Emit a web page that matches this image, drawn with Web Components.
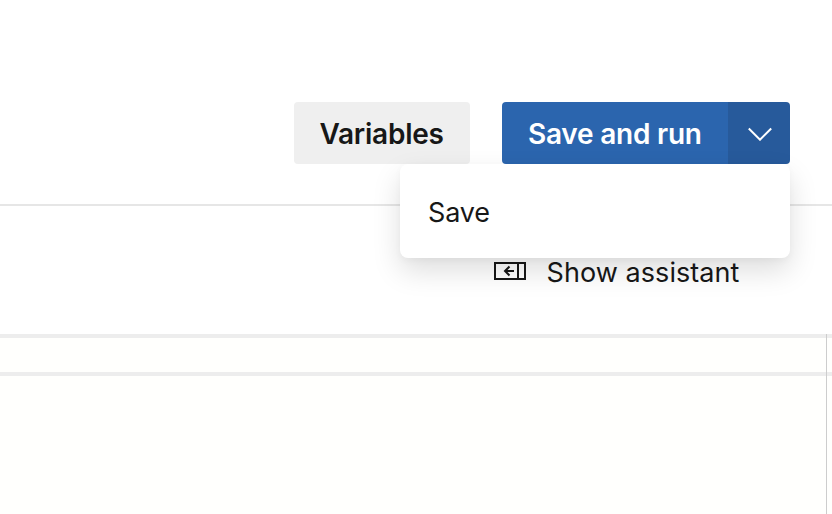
<!DOCTYPE html>
<html lang="en"><head><meta charset="utf-8"><title>Editor</title>
<style>html,body{margin:0;height:100%;overflow:hidden;background:#fff}body{font-family:Inter,"Liberation Sans",sans-serif;color:#171717}</style></head>
<body>
<editor-page></editor-page>
<script>
const define=(name,html)=>customElements.define(name,class extends HTMLElement{
  constructor(){super();this.attachShadow({mode:'open'}).innerHTML=html}
});
define('plain-button',`<style>
:host{display:flex;box-sizing:border-box;width:176px;height:62px;padding-left:25.5px;align-items:center;border-radius:4px;background:#efefef;font-size:28px;font-weight:600;letter-spacing:-.25px;white-space:nowrap}
span{padding-top:2px}</style><span><slot></slot></span>`);
define('split-button',`<style>
:host{display:flex;position:relative;width:288px;height:62px;color:#fff;font-size:28px;font-weight:600;letter-spacing:-.23px;white-space:nowrap}
.main{box-sizing:border-box;width:226px;padding-left:26px;display:flex;align-items:center;background:#2b65ae;border-radius:4px 0 0 4px}
.main span{padding-top:2px}
.drop{width:62px;display:grid;place-items:center;background:#275a9b;border-radius:0 4px 4px 0}
svg{display:block}
.menu{position:absolute;right:0;top:62px}
</style><div class="main"><span><slot></slot></span></div>
<div class="drop"><svg width="26" height="16" viewBox="0 0 26 16" fill="none" stroke="#fff" stroke-width="2"><path d="M2.8 3.5 14 14.7 25.2 3.5"/></svg></div>
<div class="menu"><slot name="menu"></slot></div>`);
define('drop-menu',`<style>
:host{display:flex;box-sizing:border-box;width:390px;height:94px;padding-left:28px;align-items:center;border-radius:8px;background:#fff;color:#171717;font-size:27px;font-weight:400;letter-spacing:-.15px;box-shadow:0 12.8px 28.8px rgba(0,0,0,.132),0 2.4px 7.2px rgba(0,0,0,.03)}
span{padding-top:2px}</style><span><slot></slot></span>`);
define('top-bar',`<style>
:host{display:flex;position:relative;z-index:1;box-sizing:border-box;height:206px;padding:102px 42px 0 0;justify-content:flex-end;align-items:flex-start;gap:32px;border-bottom:2px solid #e6e6e6}
</style><slot></slot>`);
define('assistant-toggle',`<style>
:host{display:flex;box-sizing:border-box;height:128px;padding:50px 0 0 494px;gap:20.5px;align-items:flex-start;font-size:27px;letter-spacing:.07px;white-space:nowrap}
svg{display:block;margin-top:6px}span{line-height:34px}
</style><svg width="32" height="18" viewBox="0 0 32 18" fill="none" stroke="#171717" stroke-width="2"><path d="M1 1H31V17H1ZM24 1V17M20 9H11M15.5 4.5 11 9 15.5 13.5"/></svg><span><slot></slot></span>`);
define('canvas-area',`<style>
:host{display:flex;flex:1;background:#fffffd}
.pane{flex:1}
.ruler{height:34px;border-block:4px solid #ededed}
.side{box-sizing:border-box;width:6px;border-left:1px solid #cdcdcd}
</style><div class="pane"><div class="ruler"></div></div><div class="side"><div class="ruler"></div></div>`);
define('editor-page',`<style>:host{display:flex;flex-direction:column;width:832px;height:514px}</style>
<top-bar><plain-button>Variables</plain-button><split-button>Save and run<drop-menu slot="menu">Save</drop-menu></split-button></top-bar>
<assistant-toggle>Show assistant</assistant-toggle>
<canvas-area></canvas-area>`);
</script></body></html>
